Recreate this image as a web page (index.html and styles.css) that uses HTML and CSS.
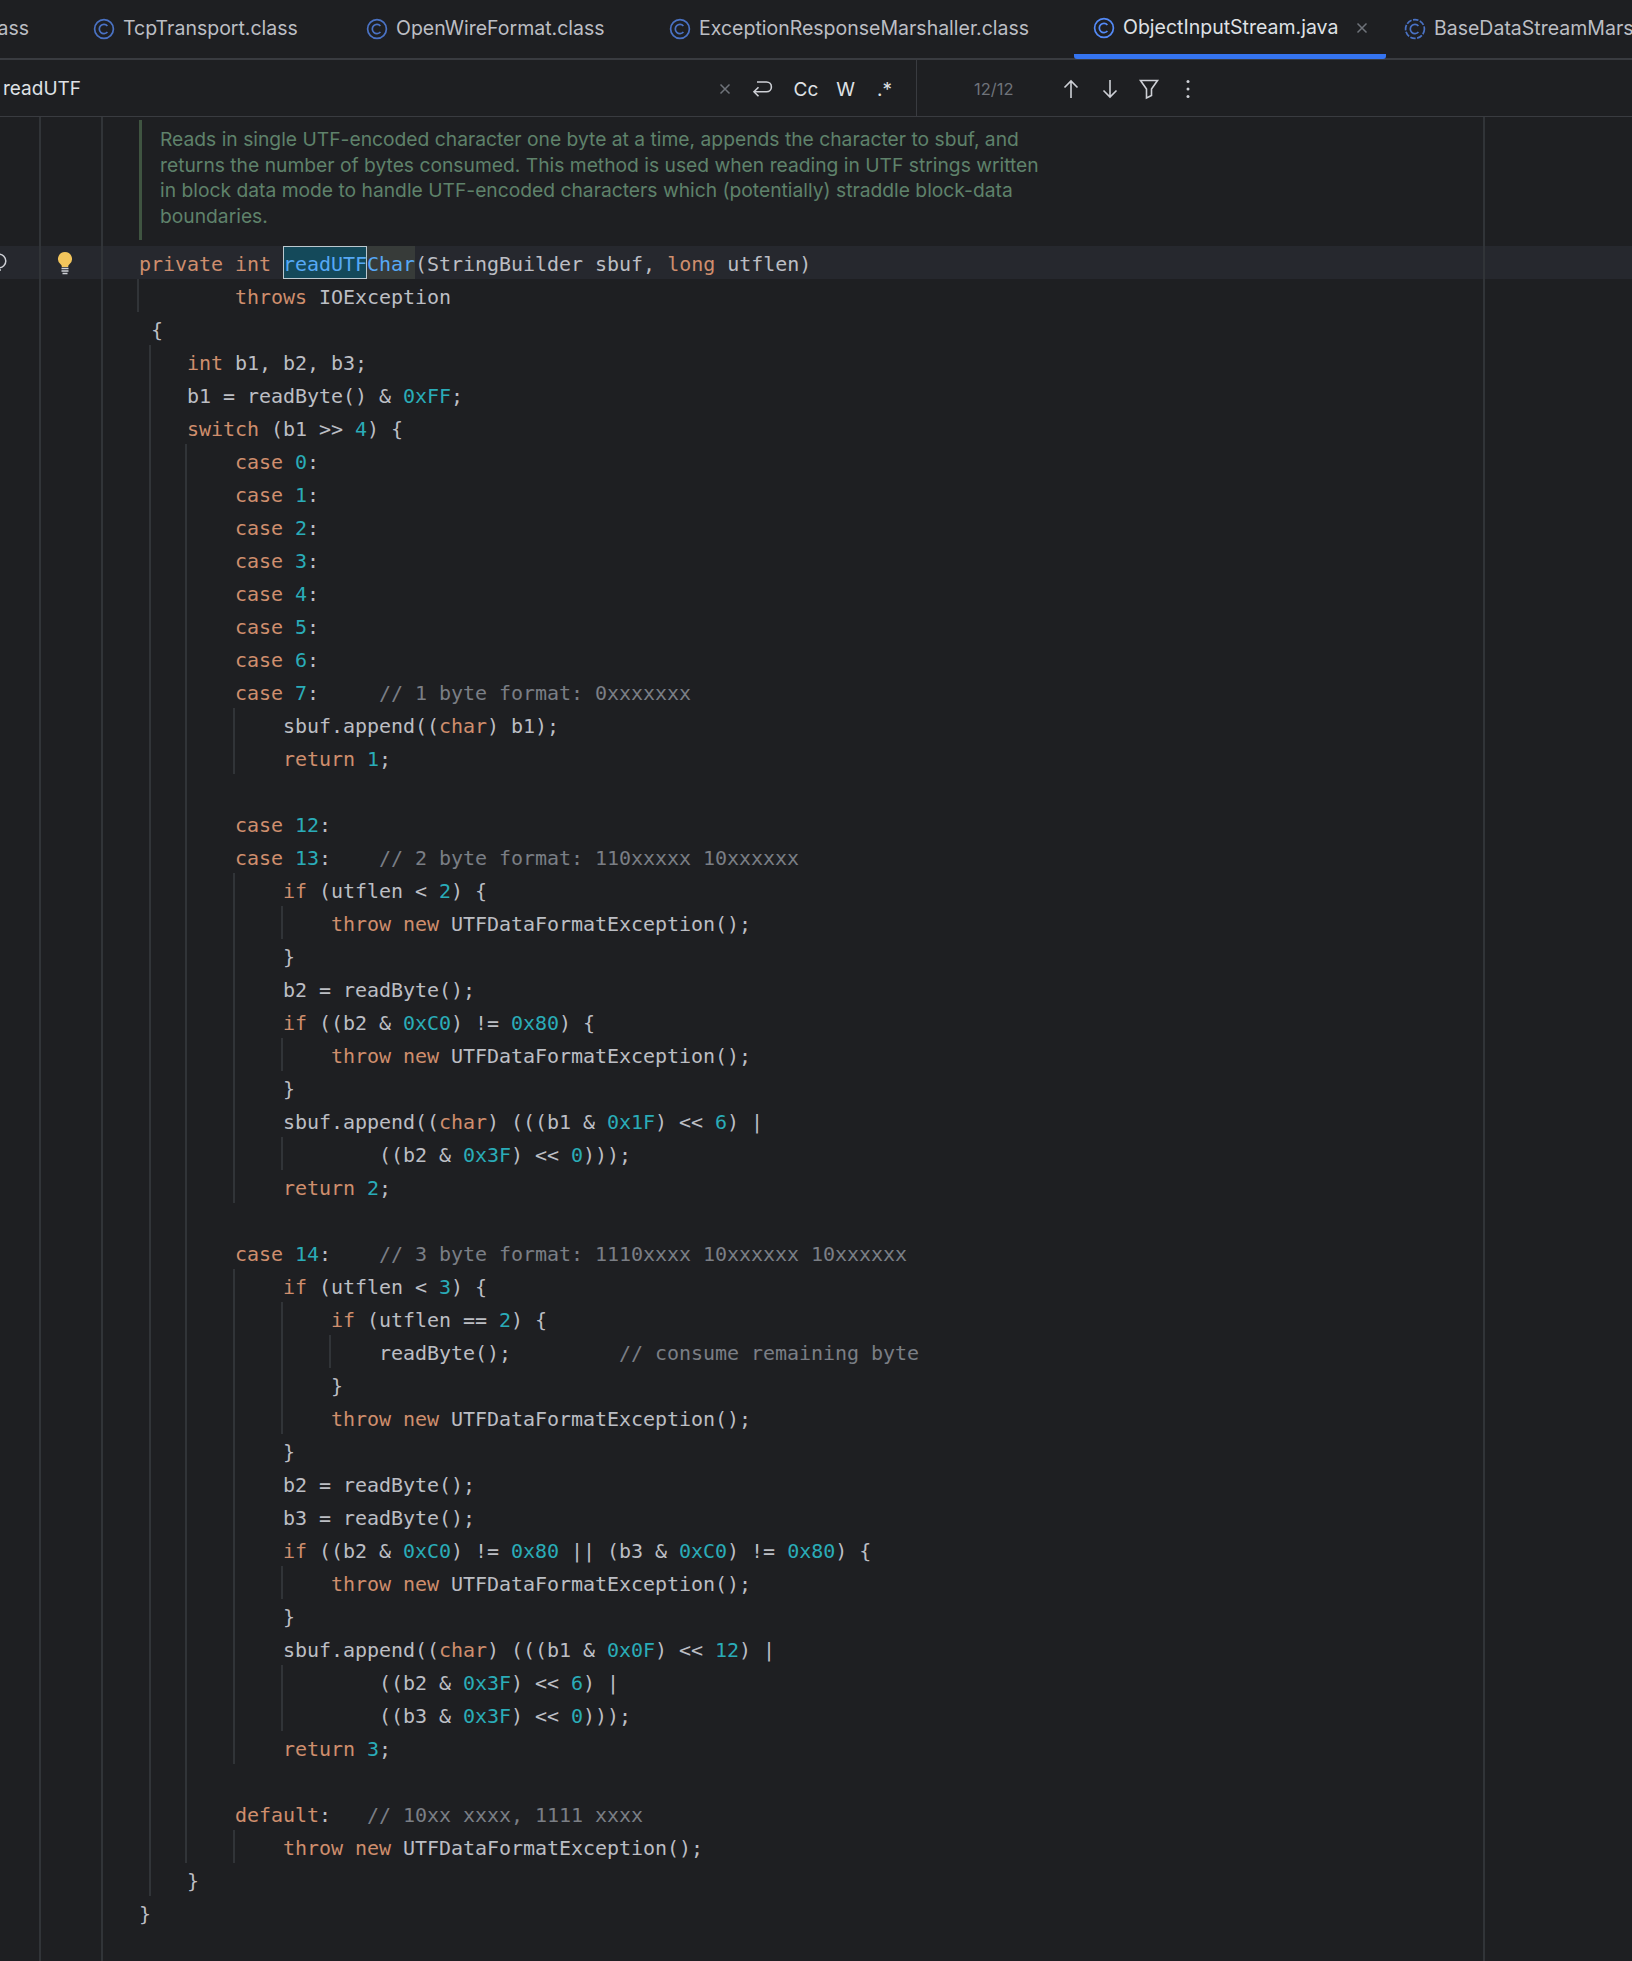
FILE: index.html
```html
<!DOCTYPE html>
<html lang="en">
<head>
<meta charset="utf-8">
<title>ObjectInputStream.java</title>
<link rel="stylesheet" href="styles.css">
</head>
<body>
<div class="app">
  <div class="tabs">
    <div class="tab first"><span class="tab-name">Class.class</span></div>
    <div class="tab t-tcp"><svg class="cicon" viewBox="0 0 22 22"><circle cx="11" cy="11" r="9.4"/><path d="M14.4 8a4.600 4.600 0 1 0 0 6"/></svg><span class="tab-name">TcpTransport.class</span></div>
    <div class="tab t-open"><svg class="cicon" viewBox="0 0 22 22"><circle cx="11" cy="11" r="9.4"/><path d="M14.4 8a4.600 4.600 0 1 0 0 6"/></svg><span class="tab-name">OpenWireFormat.class</span></div>
    <div class="tab t-exc"><svg class="cicon" viewBox="0 0 22 22"><circle cx="11" cy="11" r="9.4"/><path d="M14.4 8a4.600 4.600 0 1 0 0 6"/></svg><span class="tab-name">ExceptionResponseMarshaller.class</span></div>
    <div class="tab active"><svg class="cicon" viewBox="0 0 22 22"><circle cx="11" cy="11" r="9.4"/><path d="M14.4 8a4.600 4.600 0 1 0 0 6"/></svg><span class="tab-name">ObjectInputStream.java</span><svg class="tab-x" viewBox="0 0 12 12"><path d="M1.500 1.500l9 9M10.500 1.500l-9 9"/></svg></div>
    <div class="tab t-base"><svg class="cicon dashed" viewBox="0 0 22 22"><circle cx="11" cy="11" r="9.4"/><path d="M14.4 8a4.600 4.600 0 1 0 0 6"/></svg><span class="tab-name">BaseDataStreamMarshaller.class</span></div>
  </div>
  <div class="search">
    <div class="search-field">
      <span class="query">readUTF</span>
      <svg class="clear" viewBox="0 0 12 12"><path d="M1.500 1.500l9 9M10.500 1.500l-9 9"/></svg>
      <svg class="ic wrap" viewBox="0 -1 22 22"><path d="M6 3h9.500a4.800 4.800 0 0 1 0 9.800H3"/><path d="M7.500 8.300L3 12.800l4.500 4.500"/></svg>
      <span class="opt cc">Cc</span>
      <span class="opt w">W</span>
      <span class="opt re">.*</span>
    </div>
    <div class="search-tools">
      <span class="count">12/12</span>
      <svg class="ic up" viewBox="0 0 20 22"><path d="M10 20V3M3.500 9.500L10 3l6.500 6.500"/></svg>
      <svg class="ic down" viewBox="0 0 20 22"><path d="M10 2v17M3.500 12.500L10 19l6.500-6.500"/></svg>
      <svg class="ic filter" viewBox="0 0 22 22"><path d="M2.500 2.500h17L13.500 11v6.500l-5 2.500V11z"/></svg>
      <svg class="kebab" viewBox="0 0 6 20"><circle cx="3" cy="2.500" r="1.500"/><circle cx="3" cy="10" r="1.500"/><circle cx="3" cy="17.500" r="1.500"/></svg>
    </div>
  </div>
  <div class="editor">
    <div class="gutter g-left">
      <div class="doc-gap"></div>
      <div class="hl"><svg class="recur" viewBox="0 0 16 24"><circle cx="-1" cy="10" r="6.800"/><path d="M-2 19h3"/></svg></div>
    </div>
    <div class="gutter g-right">
      <div class="doc-gap"></div>
      <div class="hl"><svg class="bulb" viewBox="0 0 16 24"><path class="bulb-glass" d="M8 1a7 7 0 0 0-4.200 12.600c.8.700 1 1.400 1 2.400h6.400c0-1 .2-1.700 1-2.400A7 7 0 0 0 8 1z"/><path class="bulb-base" d="M4.500 17.500h7M4.500 20h7M5.500 22.500h5"/></svg></div>
    </div>
    <div class="main">
      <div class="code-col">
        <div class="doc-gap">
          <div class="doc">Reads in single UTF-encoded character one byte at a time, appends the character to sbuf, and returns the number of bytes consumed. This method is used when reading in UTF strings written in block data mode to handle UTF-encoded characters which (potentially) straddle block-data boundaries.</div>
        </div>
        <div class="code">
          <div class="r hl"><b>private</b> <b>int</b> <span class="fn"><span class="match">readUTF</span><span class="rest">Char</span></span>(StringBuilder sbuf, <b>long</b> utflen)</div>
          <div class="g throws"><div class="r"><b>throws</b> IOException</div></div>
          <div class="r"> {</div>
          <div class="g body">
            <div class="r"><b>int</b> b1, b2, b3;</div>
            <div class="r">b1 = readByte() &amp; <i>0xFF</i>;</div>
            <div class="r"><b>switch</b> (b1 &gt;&gt; <i>4</i>) {</div>
            <div class="g">
              <div class="r"><b>case</b> <i>0</i>:</div>
              <div class="r"><b>case</b> <i>1</i>:</div>
              <div class="r"><b>case</b> <i>2</i>:</div>
              <div class="r"><b>case</b> <i>3</i>:</div>
              <div class="r"><b>case</b> <i>4</i>:</div>
              <div class="r"><b>case</b> <i>5</i>:</div>
              <div class="r"><b>case</b> <i>6</i>:</div>
              <div class="r"><b>case</b> <i>7</i>:     <u>// 1 byte format: 0xxxxxxx</u></div>
              <div class="g">
                <div class="r">sbuf.append((<b>char</b>) b1);</div>
                <div class="r"><b>return</b> <i>1</i>;</div>
              </div>
              <div class="r"></div>
              <div class="r"><b>case</b> <i>12</i>:</div>
              <div class="r"><b>case</b> <i>13</i>:    <u>// 2 byte format: 110xxxxx 10xxxxxx</u></div>
              <div class="g">
                <div class="r"><b>if</b> (utflen &lt; <i>2</i>) {</div>
                <div class="g"><div class="r"><b>throw</b> <b>new</b> UTFDataFormatException();</div></div>
                <div class="r">}</div>
                <div class="r">b2 = readByte();</div>
                <div class="r"><b>if</b> ((b2 &amp; <i>0xC0</i>) != <i>0x80</i>) {</div>
                <div class="g"><div class="r"><b>throw</b> <b>new</b> UTFDataFormatException();</div></div>
                <div class="r">}</div>
                <div class="r">sbuf.append((<b>char</b>) (((b1 &amp; <i>0x1F</i>) &lt;&lt; <i>6</i>) |</div>
                <div class="g cont"><div class="r">((b2 &amp; <i>0x3F</i>) &lt;&lt; <i>0</i>)));</div></div>
                <div class="r"><b>return</b> <i>2</i>;</div>
              </div>
              <div class="r"></div>
              <div class="r"><b>case</b> <i>14</i>:    <u>// 3 byte format: 1110xxxx 10xxxxxx 10xxxxxx</u></div>
              <div class="g">
                <div class="r"><b>if</b> (utflen &lt; <i>3</i>) {</div>
                <div class="g">
                  <div class="r"><b>if</b> (utflen == <i>2</i>) {</div>
                  <div class="g"><div class="r">readByte();         <u>// consume remaining byte</u></div></div>
                  <div class="r">}</div>
                  <div class="r"><b>throw</b> <b>new</b> UTFDataFormatException();</div>
                </div>
                <div class="r">}</div>
                <div class="r">b2 = readByte();</div>
                <div class="r">b3 = readByte();</div>
                <div class="r"><b>if</b> ((b2 &amp; <i>0xC0</i>) != <i>0x80</i> || (b3 &amp; <i>0xC0</i>) != <i>0x80</i>) {</div>
                <div class="g"><div class="r"><b>throw</b> <b>new</b> UTFDataFormatException();</div></div>
                <div class="r">}</div>
                <div class="r">sbuf.append((<b>char</b>) (((b1 &amp; <i>0x0F</i>) &lt;&lt; <i>12</i>) |</div>
                <div class="g cont">
                  <div class="r">((b2 &amp; <i>0x3F</i>) &lt;&lt; <i>6</i>) |</div>
                  <div class="r">((b3 &amp; <i>0x3F</i>) &lt;&lt; <i>0</i>)));</div>
                </div>
                <div class="r"><b>return</b> <i>3</i>;</div>
              </div>
              <div class="r"></div>
              <div class="r"><b>default</b>:   <u>// 10xx xxxx, 1111 xxxx</u></div>
              <div class="g"><div class="r"><b>throw</b> <b>new</b> UTFDataFormatException();</div></div>
            </div>
            <div class="r">}</div>
          </div>
          <div class="r">}</div>
        </div>
      </div>
      <div class="margin-area">
        <div class="doc-gap"></div>
        <div class="hl"></div>
      </div>
    </div>
  </div>
</div>
</body>
</html>
```

FILE: styles.css
```css
* { box-sizing: border-box; }
html, body { margin: 0; padding: 0; height: 100%; background: #1e1f22; }
.app { width: 1632px; height: 1961px; overflow: hidden; display: flex; flex-direction: column; background: #1e1f22; color: #bcbec4; }

.tabs { height: 60px; flex: none; display: flex; align-items: flex-start; border-bottom: 2px solid #393b40; font: 400 19.5px/1 Inter, sans-serif; white-space: nowrap; }
.tab { height: 58px; flex: none; display: flex; align-items: center; padding-bottom: 1px; color: #bcbec4; }
.tab-name { display: block; }
.cicon { width: 22px; height: 22px; flex: none; margin-right: 8px; fill: none; stroke: #4a72c4; stroke-width: 1.7; }
.cicon.dashed circle { stroke-dasharray: 5.5 1.5; }
.first { width: 93px; justify-content: flex-end; padding-right: 64px; }
.t-tcp { width: 273px; }
.t-open { width: 303px; }
.t-exc { width: 405px; }
.active { width: 312px; height: 59px; padding: 2px 0 0 19px; color: #dfe1e5; border-bottom: 5px solid #3574f0; border-radius: 3px; }
.active .cicon { stroke: #548af7; }
.tab-x { width: 12px; height: 12px; margin-left: 18px; fill: none; stroke: #6f737a; stroke-width: 1.5; }
.t-base { padding-left: 18px; }

.search { height: 57px; flex: none; display: flex; border-bottom: 1px solid #393b40; }
.search-field { width: 917px; flex: none; display: flex; align-items: center; border-right: 1px solid #393b40; padding: 2px 0 0 3px; }
.query { font: 400 19px/1 Inter, sans-serif; color: #dfe1e5; flex: 1; padding-bottom: 2px; }
.clear { width: 12px; height: 12px; margin-right: 20px; fill: none; stroke: #6f737a; stroke-width: 1.5; }
.ic { fill: none; stroke: #ced0d6; stroke-width: 1.6; flex: none; }
.wrap { width: 22px; height: 22px; margin-right: 21px; }
.opt { font: 400 19px/1 Inter, sans-serif; color: #dfe1e5; }
.cc { margin-right: 18px; }
.w { margin-right: 22px; }
.re { margin-right: 24px; }
.search-tools { display: flex; align-items: center; padding: 2px 0 0 57px; }
.count { font: 400 16.5px/1 Inter, sans-serif; color: #6f737a; width: 87px; }
.up, .down { width: 20px; height: 22px; margin-right: 19px; }
.down { margin-right: 18px; }
.filter { width: 22px; height: 22px; margin-right: 25px; }
.kebab { width: 6px; height: 20px; fill: #ced0d6; }

.editor { flex: 1; display: flex; min-height: 0; }
.gutter { flex: none; border-right: 2px solid #313438; }
.g-left { width: 41px; }
.g-right { width: 62px; }
.doc-gap { height: 129px; }
.hl { height: 33px; background: #26282e; display: flex; align-items: center; }
.recur { width: 16px; height: 24px; fill: none; stroke: #ced0d6; stroke-width: 1.5; }
.bulb { width: 16px; height: 24px; margin-left: 16px; flex: none; }
.bulb-glass { fill: #f2c55c; }
.bulb-base { fill: none; stroke: #ced0d6; stroke-width: 1.4; }

.main { flex: 1; display: flex; min-width: 0; }
.code-col { width: 1382px; flex: none; border-right: 2px solid #313438; padding-left: 36px; }
.code-col > .doc-gap { padding-top: 3px; }
.margin-area { flex: 1; }
.doc { height: 120px; width: 900px; border-left: 3px solid #3f5441; padding: 7px 0 0 18px; font: 400 19.25px/25.6px Inter, sans-serif; color: #5f826b; }

.code { font: 400 20px/37px "DejaVu Sans Mono", monospace; letter-spacing: -0.04px; color: #bcbec4; }
.r { height: 33px; white-space: pre; }
.r.hl { display: block; margin-left: -36px; padding-left: 36px; }
.g { margin-left: -2px; padding-left: 48px; border-left: 2px solid #313438; }
.g.throws { padding-left: 96px; }
.g.body { margin-left: 10px; padding-left: 36px; }
.g.cont { padding-left: 96px; }
b { font-weight: 400; color: #cf8e6d; }
i { font-style: normal; color: #2aacb8; }
u { text-decoration: none; color: #7a7e85; }
.fn { color: #56a8f5; }
.match { display: inline-block; background: #14495a; box-shadow: inset 0 0 0 1px #bcc8cf; height: 33px; }
.rest { display: inline-block; background: #373b39; height: 33px; }
```
